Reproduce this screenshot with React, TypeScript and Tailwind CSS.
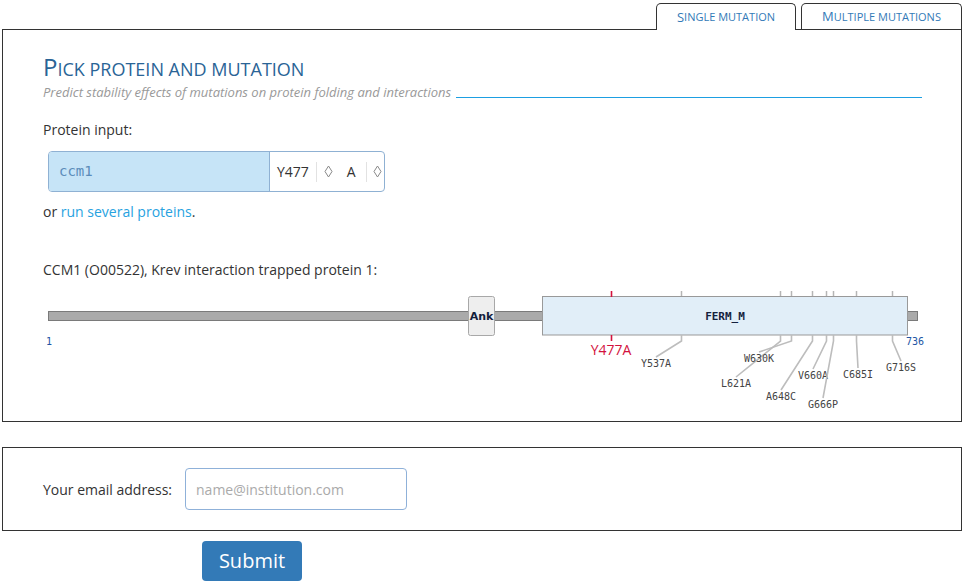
import React from "react";

type Mut = { name: string; x: number; ex: number; ey: number };

// positions are page x; line ends where the label sits
const mutations: Mut[] = [
  { name: "Y537A", x: 681, ex: 656, ey: 357 },
  { name: "L621A", x: 780, ex: 736, ey: 377 },
  { name: "W630K", x: 791, ex: 759, ey: 352 },
  { name: "A648C", x: 812, ex: 781, ey: 390 },
  { name: "V660A", x: 826, ex: 813, ey: 369 },
  { name: "G666P", x: 833, ex: 823, ey: 398 },
  { name: "C685I", x: 856, ex: 858, ey: 368 },
  { name: "G716S", x: 892, ex: 901, ey: 361 },
];

const Lozenge = () => (
  <svg width="9" height="13" viewBox="0 0 9 13" className="block">
    <polygon points="4.5,1 8,6.5 4.5,12 1,6.5" fill="none" stroke="#888" strokeWidth="1" />
  </svg>
);

const ProteinMap = () => (
  <svg width="890" height="131" viewBox="43 285 890 131" className="block">
    <rect x="48.5" y="311.5" width="869" height="9" fill="#aaa" stroke="#7a7a7a" />
    <rect x="468.5" y="296.5" width="26" height="39" rx="2" fill="#eeeeee" stroke="#a8a8a8" />
    <text x="481.5" y="320" textAnchor="middle" fontFamily="DejaVu Sans" fontWeight="bold" fontSize="11" fill="#14213d">
      Ank
    </text>
    <rect x="542.5" y="296.5" width="365" height="38.5" fill="#e1eef8" stroke="#999" />
    <text x="725" y="320" textAnchor="middle" fontFamily="DejaVu Sans Mono" fontWeight="bold" fontSize="11" fill="#14213d">
      FERM_M
    </text>

    {mutations.map((m) => (
      <g key={m.name}>
        <line x1={m.x + 0.5} y1="291" x2={m.x + 0.5} y2="296" stroke="#b5b5b5" strokeWidth="1.5" />
        <polyline
          points={`${m.x + 0.5},335 ${m.x + 0.5},341 ${m.ex},${m.ey}`}
          fill="none"
          stroke="#bdbdbd"
          strokeWidth="1.6"
        />
        <text x={m.ex} y={m.ey + 9.5} textAnchor="middle" fontFamily="DejaVu Sans Mono" fontSize="10" fill="#444">
          {m.name}
        </text>
      </g>
    ))}

    <line x1="611.5" y1="291" x2="611.5" y2="297" stroke="#d3123d" strokeWidth="1.6" />
    <line x1="611.5" y1="335" x2="611.5" y2="341" stroke="#d3123d" strokeWidth="1.6" />
    <text x="611" y="355" textAnchor="middle" fontFamily="Open Sans" fontSize="14" fill="#d3123d">
      Y477A
    </text>

    <text x="46" y="345" fontFamily="DejaVu Sans Mono" fontSize="10" fill="#2255a4">
      1
    </text>
    <text x="906" y="345" fontFamily="DejaVu Sans Mono" fontSize="10" fill="#2255a4">
      736
    </text>
  </svg>
);

export default function App() {
  return (
    <div className="w-[964px] h-[584px] bg-white text-[#333] text-[14px] font-['Open_Sans',sans-serif] overflow-hidden">
      {/* tabs */}
      <div className="ml-[2px] w-[960px] pt-[3px] flex justify-end items-end gap-[5px]">
        <div className="w-[140px] h-[27px] -mb-px relative z-10 bg-white border border-b-0 border-[#333] rounded-t-[5px] flex items-center justify-center pt-px text-[#337ab7]">
          <span className="text-[13px]">S</span>
          <span className="text-[11px] uppercase">ingle mutation</span>
        </div>
        <div className="w-[161px] h-[26px] bg-white border border-b-0 border-[#333] rounded-t-[5px] flex items-center justify-center pt-px text-[#337ab7]">
          <span className="text-[13px]">M</span>
          <span className="text-[11px] uppercase">ultiple mutations</span>
        </div>
      </div>

      {/* protein panel */}
      <div className="ml-[2px] w-[960px] h-[393px] border border-[#333] pt-[21px] pl-[40px] pr-[39px]">
        <h1 className="h-[32px] flex items-baseline text-[#2a6496]">
          <span className="text-[24px] leading-[32px]">P</span>
          <span className="text-[18px] leading-[32px] uppercase">ick protein and mutation</span>
        </h1>
        <div className="flex items-end">
          <p className="text-[13px] leading-[18px] italic text-[#999]">
            Predict stability effects of mutations on protein folding and interactions
          </p>
          <div className="flex-1 ml-[5px] mb-[3px] h-px bg-[#1d9fe2]" />
        </div>

        <p className="mt-[19px] leading-[20px]">Protein input:</p>

        <div className="mt-[11px] ml-[5px] w-[337px] h-[41px] flex border border-[#8fb1d3] rounded-[4px] overflow-hidden">
          <div className="w-[221px] bg-[#c6e4f7] border-r border-[#8fb1d3] flex items-center pl-[10px] font-['DejaVu_Sans_Mono',monospace] text-[14px] text-[#5b8cba]">
            ccm1
          </div>
          <div className="flex-1 flex items-center pl-[7px]">
            <span>Y477</span>
            <span className="ml-[7px] w-px h-[20px] bg-[#e2e2e2]" />
            <span className="ml-[7px]">
              <Lozenge />
            </span>
            <span className="ml-[14px]">A</span>
            <span className="ml-[10px] w-px h-[20px] bg-[#e2e2e2]" />
            <span className="ml-[6px]">
              <Lozenge />
            </span>
          </div>
        </div>

        <p className="mt-[10px] leading-[20px]">
          or <a className="text-[#27a2df]">run several proteins</a>.
        </p>

        <p className="mt-[38px] leading-[20px]">CCM1 (O00522), Krev interaction trapped protein 1:</p>

        <div className="mt-[5px]">
          <ProteinMap />
        </div>
      </div>

      {/* email panel */}
      <div className="mt-[25px] ml-[2px] w-[960px] h-[84px] border border-[#333] flex items-center pl-[40px] gap-[13px]">
        <label>Your email address:</label>
        <input
          placeholder="name@institution.com"
          className="w-[222px] h-[42px] border border-[#8fb1d9] rounded-[4px] px-[10px] text-[14px] placeholder:text-[#aaa] outline-none"
        />
      </div>

      <button className="mt-[10px] ml-[202px] w-[100px] h-[40px] bg-[#337ab7] rounded-[4px] text-white text-[20px]">
        Submit
      </button>
    </div>
  );
}
